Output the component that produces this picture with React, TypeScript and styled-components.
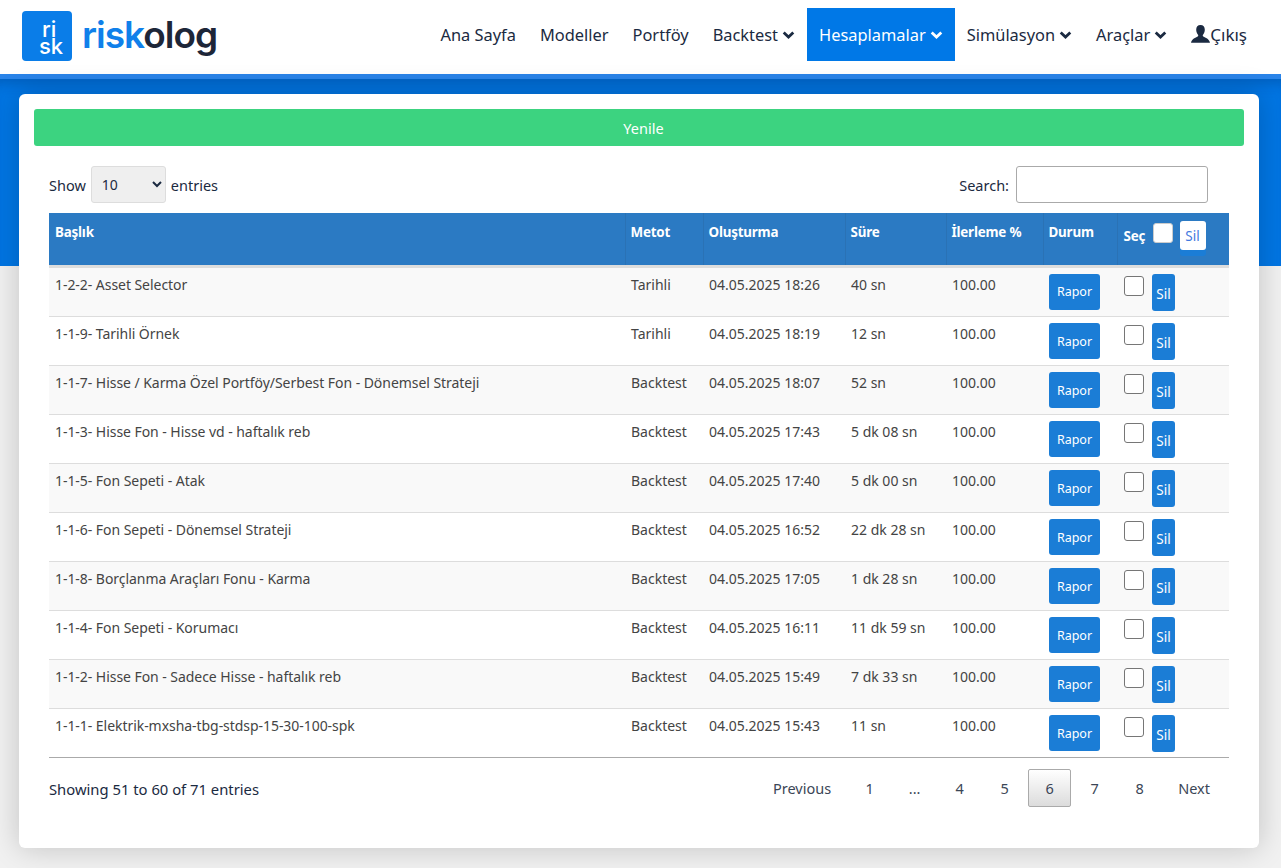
import { useState } from 'react'
import styled, { createGlobalStyle } from 'styled-components'

const rows = [
  ['1-2-2- Asset Selector', 'Tarihli', '04.05.2025 18:26', '40 sn'],
  ['1-1-9- Tarihli Örnek', 'Tarihli', '04.05.2025 18:19', '12 sn'],
  ['1-1-7- Hisse / Karma Özel Portföy/Serbest Fon - Dönemsel Strateji', 'Backtest', '04.05.2025 18:07', '52 sn'],
  ['1-1-3- Hisse Fon - Hisse vd - haftalık reb', 'Backtest', '04.05.2025 17:43', '5 dk 08 sn'],
  ['1-1-5- Fon Sepeti - Atak', 'Backtest', '04.05.2025 17:40', '5 dk 00 sn'],
  ['1-1-6- Fon Sepeti - Dönemsel Strateji', 'Backtest', '04.05.2025 16:52', '22 dk 28 sn'],
  ['1-1-8- Borçlanma Araçları Fonu - Karma', 'Backtest', '04.05.2025 17:05', '1 dk 28 sn'],
  ['1-1-4- Fon Sepeti - Korumacı', 'Backtest', '04.05.2025 16:11', '11 dk 59 sn'],
  ['1-1-2- Hisse Fon - Sadece Hisse - haftalık reb', 'Backtest', '04.05.2025 15:49', '7 dk 33 sn'],
  ['1-1-1- Elektrik-mxsha-tbg-stdsp-15-30-100-spk', 'Backtest', '04.05.2025 15:43', '11 sn'],
]

const navItems = [
  { label: 'Ana Sayfa' },
  { label: 'Modeller' },
  { label: 'Portföy' },
  { label: 'Backtest', caret: true },
  { label: 'Hesaplamalar', caret: true, active: true },
  { label: 'Simülasyon', caret: true },
  { label: 'Araçlar', caret: true },
]

const pages = ['1', '...', '4', '5', '6', '7', '8']

const font = `"Noto Sans", "Liberation Sans", sans-serif`

const GlobalStyle = createGlobalStyle`
  html, body { margin: 0; padding: 0; }
  body { background: #f1f1f1; font-family: ${font}; font-size: 14px; color: #333; }
  * { box-sizing: border-box; }
`

const Page = styled.div`
  position: relative;
  width: 1281px;
  height: 868px;
  overflow: hidden;
`

const Header = styled.header`
  height: 74px;
  background: #fff;
  display: flex;
  align-items: flex-start;
  justify-content: space-between;
  padding: 8px 22px 0;
`

const Brand = styled.div`
  display: flex;
  align-items: center;
  height: 53px;
`

const BrandMark = styled.svg`
  display: block;
  width: 50px;
  height: 50px;
  margin-top: 3px;
`

const MarkText = styled.text`
  fill: #fff;
  font-family: "Inter", sans-serif;
  font-weight: 500;
  font-size: 22px;
`

const BrandName = styled.div`
  margin-left: 10px;
  font-family: "Inter", sans-serif;
  font-size: 37px;
  font-weight: 600;
  letter-spacing: -1px;
  color: #1d2638;
  line-height: 50px;
`

const BrandAccent = styled.span`
  color: #1080ea;
`

const Nav = styled.nav`
  display: flex;
`

const NavLink = styled.a<{ $active?: boolean }>`
  display: flex;
  align-items: center;
  gap: 4px;
  height: 53px;
  padding: 0 12px;
  font-size: 16.4px;
  color: ${p => (p.$active ? '#fff' : '#1b2a41')};
  background: ${p => (p.$active ? '#0078e7' : 'transparent')};
`

const Logout = styled(NavLink)`
  gap: 0;
  font-size: 17px;
`

const Banner = styled.div`
  position: absolute;
  left: 0;
  top: 74px;
  width: 100%;
  height: 192px;
  background: #0076e4;
  border-top: 5px solid #2a84e9;
  box-shadow: inset 0 14px 14px -10px rgba(0, 50, 110, 0.35);
`

const Card = styled.main`
  position: absolute;
  left: 19px;
  top: 94px;
  width: 1240px;
  height: 754px;
  padding: 15px;
  background: #fff;
  border-radius: 6px;
  box-shadow: 0 0 30px rgba(0, 0, 0, 0.2);
`

const RefreshButton = styled.button`
  display: block;
  width: 1210px;
  height: 37px;
  padding: 0 0 0 9px;
  border: none;
  border-radius: 3px;
  background: #3cd380;
  color: #fff;
  font-family: ${font};
  font-size: 14.5px;
`

const Content = styled.div`
  padding: 20px 15px 0;
`

const Controls = styled.div`
  display: flex;
  justify-content: space-between;
  align-items: flex-start;
  height: 37px;
  padding-right: 21px;
  margin-bottom: 10px;
`

const Label = styled.label`
  display: flex;
  align-items: center;
  gap: 5px;
  height: 37px;
  padding-top: 1px;
  font-size: 14.5px;
  color: #1b2a41;
`

const PageSize = styled.select`
  width: 75px;
  height: 37px;
  margin-top: -1px;
  padding-left: 6px;
  border: 1px solid #ddd;
  border-radius: 3px;
  background-color: #efefef;
  color: #1b2a41;
  font-family: ${font};
  font-size: 14px;
`

const SearchInput = styled.input`
  width: 192px;
  height: 37px;
  margin: -1px 0 0 2px;
  border: 1px solid #aaa;
  border-radius: 3px;
  background: #fff;
`

const Table = styled.table`
  width: 1180px;
  table-layout: fixed;
  border-collapse: collapse;
`

const HeadCell = styled.th`
  height: 53px;
  padding: 10px 5px 0;
  vertical-align: top;
  text-align: left;
  font-size: 13.4px;
  letter-spacing: -0.2px;
  font-weight: 700;
  color: #fff;
  background: #2b7ac3;
  border-left: 1px solid #2a72b5;
  border-bottom: 3px solid #ddd;
  &:first-child {
    padding-left: 6px;
    border-left: none;
  }
`

const SelectHead = styled.div`
  position: relative;
  height: 30px;
`

const SelectLabel = styled.span`
  position: absolute;
  left: 1px;
  top: 4px;
`

const HeadCheck = styled.input`
  appearance: none;
  position: absolute;
  left: 30px;
  top: 0;
  width: 20px;
  height: 20px;
  margin: 0;
  border-radius: 3px;
  background: #fff;
  border: 1px solid #ccc;
`

const HeadDelete = styled.button`
  position: absolute;
  left: 57px;
  top: -2px;
  width: 26px;
  height: 29px;
  padding: 0;
  border: none;
  border-radius: 3px;
  background: #fff;
  color: #3f78e0;
  font-family: ${font};
  font-size: 13.5px;
  font-weight: 400;
  letter-spacing: 0;
  box-shadow: 0 6px 0 #1b7dd6;
`

const Row = styled.tr<{ $odd: boolean }>`
  height: 49px;
  background: ${p => (p.$odd ? '#f9f9f9' : '#fff')};
`

const Cell = styled.td`
  padding: 8px 6px 0;
  vertical-align: top;
  font-size: 14px;
  line-height: 18px;
  color: #444;
  border-bottom: 1px solid #ddd;
  white-space: nowrap;
`

const TitleCell = styled(Cell)`
  letter-spacing: -0.05px;
`

const ActionCell = styled(Cell)`
  padding-top: 6px;
`

const SelectCell = styled(ActionCell)`
  display: flex;
  height: 49px;
  padding-left: 7px;
`

const ReportButton = styled.button`
  display: block;
  width: 51px;
  height: 36px;
  padding: 0;
  border: none;
  border-radius: 3px;
  background: #1b7dd6;
  color: #fff;
  font-family: ${font};
  font-size: 12.5px;
`

const RowCheck = styled.input`
  appearance: none;
  width: 20px;
  height: 20px;
  margin: 2px 8px 0 0;
  border: 1px solid #767676;
  border-radius: 3px;
  background: #fff;
`

const DeleteButton = styled.button`
  width: 23px;
  height: 37px;
  padding: 3px 0 0;
  border: none;
  border-radius: 3px;
  background: #1b7dd6;
  color: #fff;
  font-family: ${font};
  font-size: 13.5px;
`

const Footer = styled.div`
  display: flex;
  justify-content: space-between;
  align-items: center;
  height: 62px;
  border-top: 1px solid #aaa;
  margin-top: -1px;
  color: #1b2a41;
`

const Summary = styled.span`
  font-size: 14.8px;
`

const Pagination = styled.div`
  display: flex;
  margin: -2px 4px 0 0;
`

const PageLink = styled.a<{ $current?: boolean }>`
  display: flex;
  align-items: center;
  justify-content: center;
  min-width: 43px;
  height: 38px;
  margin-left: 2px;
  padding: 0 14px;
  font-size: 14.5px;
  color: #3b4656;
  border-radius: 2px;
  border: 1px solid ${p => (p.$current ? '#aaa' : 'transparent')};
  background: ${p => (p.$current ? 'linear-gradient(#fff, #dcdcdc)' : 'transparent')};
`

const ColumnWidths = () => (
  <colgroup>
    <col width={576} />
    <col width={78} />
    <col width={142} />
    <col width={101} />
    <col width={97} />
    <col width={74} />
    <col width={112} />
  </colgroup>
)

function Caret() {
  return (
    <svg width="13" height="8" viewBox="0 0 13 8" aria-hidden="true">
      <path d="M1.7 1.5 6.5 6l4.800-4.500" fill="none" stroke="currentColor" strokeWidth="2.8" />
    </svg>
  )
}

function UserIcon() {
  return (
    <svg width="19" height="19" viewBox="0 0 19 19" aria-hidden="true">
      <path
        fill="#1b2a41"
        d="M9.5 0C6.7 0 5.2 2 5.2 4.8c0 2 .8 3.8 1.8 5 .4.6.3 1.300-.3 1.700C4.500 12.800 1 13.600 0 17.800h19c-1-4.200-4.500-5-6.700-6.300-.6-.4-.7-1.100-.3-1.700 1-1.200 1.800-3 1.800-5C13.800 2 12.300 0 9.500 0z"
      />
    </svg>
  )
}

export default function App() {
  const [size, setSize] = useState('10')

  return (
    <Page>
      <GlobalStyle />
      <Header>
        <Brand>
          <BrandMark viewBox="0 0 50 50">
            <rect width="50" height="50" rx="4" fill="#0a7de8" />
            <MarkText x="20" y="26">ri</MarkText>
            <MarkText x="17" y="43">sk</MarkText>
          </BrandMark>
          <BrandName>
            <BrandAccent>risk</BrandAccent>olog
          </BrandName>
        </Brand>
        <Nav>
          {navItems.map(item => (
            <NavLink key={item.label} $active={item.active}>
              {item.label}
              {item.caret && <Caret />}
            </NavLink>
          ))}
          <Logout>
            <UserIcon />
            Çıkış
          </Logout>
        </Nav>
      </Header>
      <Banner />
      <Card>
        <RefreshButton>Yenile</RefreshButton>
        <Content>
          <Controls>
            <Label>
              Show
              <PageSize value={size} onChange={e => setSize(e.target.value)}>
                <option value="10">10</option>
                <option value="25">25</option>
                <option value="50">50</option>
              </PageSize>
              entries
            </Label>
            <Label>
              Search:
              <SearchInput />
            </Label>
          </Controls>
          <Table>
            <ColumnWidths />
            <thead>
              <tr>
                <HeadCell>Başlık</HeadCell>
                <HeadCell>Metot</HeadCell>
                <HeadCell>Oluşturma</HeadCell>
                <HeadCell>Süre</HeadCell>
                <HeadCell>İlerleme %</HeadCell>
                <HeadCell>Durum</HeadCell>
                <HeadCell>
                  <SelectHead>
                    <SelectLabel>Seç</SelectLabel>
                    <HeadCheck type="checkbox" />
                    <HeadDelete>Sil</HeadDelete>
                  </SelectHead>
                </HeadCell>
              </tr>
            </thead>
            <tbody>
              {rows.map((row, i) => (
                <Row key={row[0]} $odd={i % 2 === 0}>
                  <TitleCell>{row[0]}</TitleCell>
                  <Cell>{row[1]}</Cell>
                  <Cell>{row[2]}</Cell>
                  <Cell>{row[3]}</Cell>
                  <Cell>100.00</Cell>
                  <ActionCell>
                    <ReportButton>Rapor</ReportButton>
                  </ActionCell>
                  <SelectCell>
                    <RowCheck type="checkbox" />
                    <DeleteButton>Sil</DeleteButton>
                  </SelectCell>
                </Row>
              ))}
            </tbody>
          </Table>
          <Footer>
            <Summary>Showing 51 to 60 of 71 entries</Summary>
            <Pagination>
              <PageLink>Previous</PageLink>
              {pages.map(p => (
                <PageLink key={p} $current={p === '6'}>
                  {p}
                </PageLink>
              ))}
              <PageLink>Next</PageLink>
            </Pagination>
          </Footer>
        </Content>
      </Card>
    </Page>
  )
}
